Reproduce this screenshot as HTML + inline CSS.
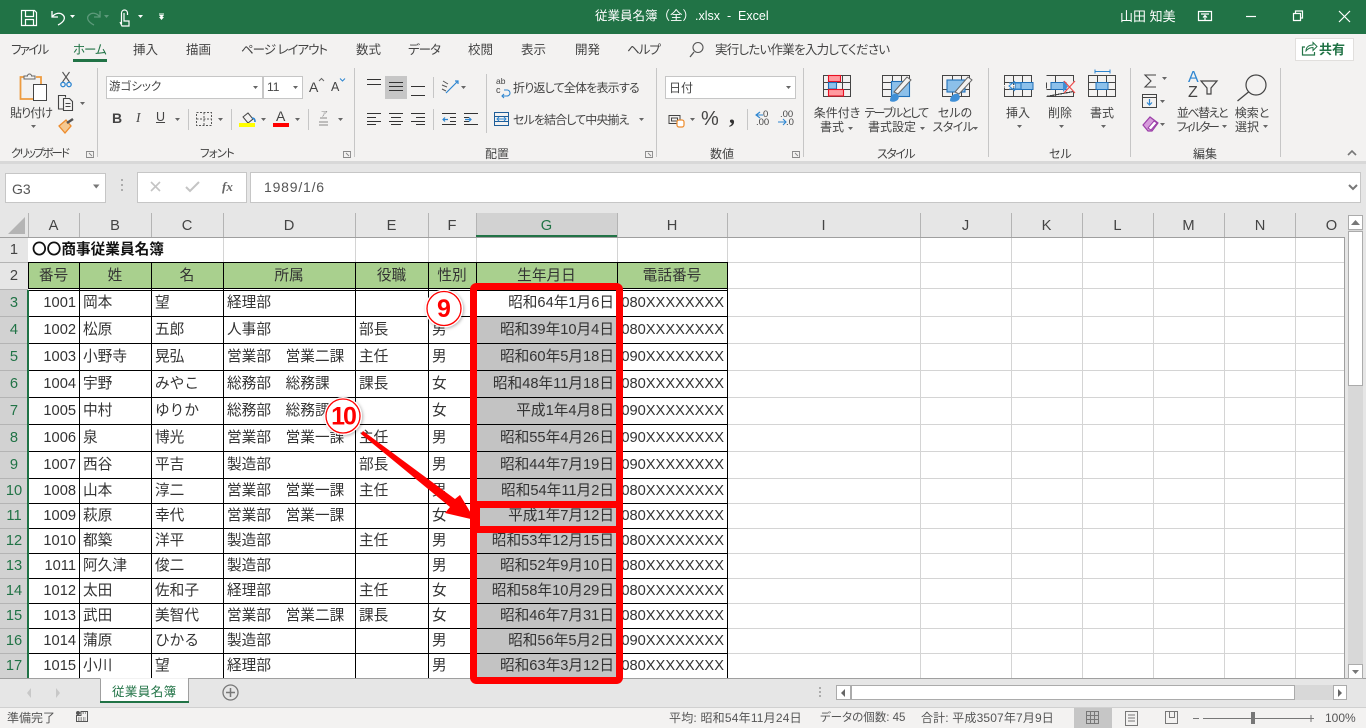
<!DOCTYPE html>
<html lang="ja"><head><meta charset="utf-8"><title>従業員名簿</title>
<style>
html,body{margin:0;padding:0}
body{width:1366px;height:728px;overflow:hidden;position:relative;background:#e6e6e6;font-family:"Liberation Sans","Noto Sans CJK JP",sans-serif}
.b{position:absolute}
.t{position:absolute;white-space:nowrap;font-size:12px;line-height:16px;color:#444;font-feature-settings:"palt"}
.m{text-align:center;transform:translateX(-50%)}
.w{color:#fff}
.tab{font-size:12.5px}
.st{font-size:12px;color:#555;top:710px}
svg.o{position:absolute;left:0;top:0}
table{position:absolute;left:0;top:213px;border-collapse:collapse;table-layout:fixed;width:1345px;font-size:14.67px;color:#333}
td{padding:1px 3px 0 4px;height:auto;white-space:nowrap;overflow:hidden;line-height:16px;box-sizing:border-box}
tr.h td,td.c{text-align:center;padding:1px 0 0}
tr.h td{padding-top:2px;color:#444}
td.n{text-align:center;padding:1px 0 0;color:#444}
tr.s td.n{color:#217346}
td.r{text-align:right}
tr.h td.sel{color:#217346}
</style></head><body>
<!-- backgrounds -->
<div class="b" style="left:0;top:0;width:1366px;height:34px;background:#217346"></div>
<div class="b" style="left:0;top:34px;width:1366px;height:127px;background:#f3f2f1"></div>
<div class="b" style="left:0;top:161px;width:1366px;height:3px;background:#d8d8d8"></div>
<div class="b" style="left:5px;top:173px;width:99px;height:28px;background:#fff;border:1px solid #c6c6c6"></div>
<div class="b" style="left:137px;top:172px;width:108px;height:29px;background:#fff;border:1px solid #c6c6c6"></div>
<div class="b" style="left:250px;top:172px;width:1109px;height:29px;background:#fff;border:1px solid #c6c6c6"></div>
<div class="b" style="left:28px;top:237px;width:1317px;height:441px;background:#fff"></div>
<div class="b" style="left:0;top:290px;width:28px;height:388px;background:#d2d2d2"></div>
<div class="b" style="left:476px;top:213px;width:141px;height:24px;background:#d2d2d2"></div>
<div class="b" style="left:0;top:678px;width:1366px;height:29px;background:#e6e6e6"></div>
<div class="b" style="left:0;top:707px;width:1366px;height:21px;background:#f3f2f1;border-top:1px solid #d0d0d0;box-sizing:border-box"></div>
<div class="b" style="left:1074px;top:708px;width:38px;height:20px;background:#c6c6c6"></div>
<!-- input boxes in ribbon -->
<div class="b" style="left:106px;top:76px;width:155px;height:21px;background:#fff;border:1px solid #c6c6c6"></div>
<div class="b" style="left:263px;top:76px;width:38px;height:21px;background:#fff;border:1px solid #c6c6c6"></div>
<div class="b" style="left:665px;top:76px;width:129px;height:21px;background:#fff;border:1px solid #c6c6c6"></div>
<div class="b" style="left:385px;top:76px;width:22px;height:23px;background:#c6c6c6"></div>
<div class="b" style="left:1295px;top:38px;width:57px;height:21px;background:#fff;border:1px solid #e1dfdd"></div>

<svg class="o" width="1366" height="728" viewBox="0 0 1366 728" fill="none">
<!-- G fill -->
<rect x="477" y="317" width="140" height="361" fill="#c3c3c3"/>
<!-- grid light -->
<path shape-rendering="crispEdges" stroke="#d4d4d4" d="M28 262.5H1345M727 288.5H1345M727 316.5H1345M727 343.5H1345M727 370.5H1345M727 397.5H1345M727 424.5H1345M727 451.5H1345M727 478.5H1345M727 503.5H1345M727 528.5H1345M727 553.5H1345M727 578.5H1345M727 603.5H1345M727 628.5H1345M727 653.5H1345M223.5 237V262M355.5 237V262M428.5 237V262M476.5 237V262M617.5 237V262M727.5 237V262M920.5 237V678M1011.5 237V678M1082.5 237V678M1153.5 237V678M1224.5 237V678M1295.5 237V678"/>
<!-- data grid black -->
<rect x="28" y="263" width="699" height="25" fill="#a9d08e"/>
<path shape-rendering="crispEdges" stroke="#000" d="M28 262.5H728M28 288.5H728M28 290.5H728M28 316.5H728M28 343.5H728M28 370.5H728M28 397.5H728M28 424.5H728M28 451.5H728M28 478.5H728M28 503.5H728M28 528.5H728M28 553.5H728M28 578.5H728M28 603.5H728M28 628.5H728M28 653.5H728M28.5 262V289M79.5 262V678M151.5 262V678M223.5 262V678M355.5 262V678M428.5 262V678M476.5 262V678M617.5 262V678M727.5 262V678"/>
<!-- header lines -->
<path shape-rendering="crispEdges" stroke="#b4b4b4" d="M28.5 213V237M79.5 213V237M151.5 213V237M223.5 213V237M355.5 213V237M428.5 213V237M476.5 213V237M617.5 213V237M727.5 213V237M920.5 213V237M1011.5 213V237M1082.5 213V237M1153.5 213V237M1224.5 213V237M1295.5 213V237M0 262.5H28M0 289.5H28M0 316.5H28M0 343.5H28M0 370.5H28M0 397.5H28M0 424.5H28M0 451.5H28M0 478.5H28M0 503.5H28M0 528.5H28M0 553.5H28M0 578.5H28M0 603.5H28M0 628.5H28M0 653.5H28"/>
<path shape-rendering="crispEdges" stroke="#9f9f9f" d="M0 237.5H1345M1344.5 237V678M0 678.5H100M188 678.5H1366"/>
<rect x="476" y="235" width="141" height="2" fill="#217346"/>
<rect x="27" y="290" width="2" height="388" fill="#217346"/>
<path d="M25 217V234H8z" fill="#b4b4b4"/>
<!-- scrollbars -->
<rect x="1348" y="230" width="15" height="448" fill="#d8d8d8"/>
<rect x="1348.5" y="215.5" width="14" height="14" fill="#fff" stroke="#ababab"/>
<rect x="1348.5" y="231.5" width="14" height="154" fill="#fff" stroke="#ababab"/>
<path d="M1351 225l4.5-5 4.5 5z" fill="#777"/>
<rect x="1348.5" y="664.5" width="14" height="14" fill="#fff" stroke="#ababab"/>
<path d="M1352 670l3.5 4 3.5-4z" fill="#777"/>
<rect x="836" y="685" width="510" height="15" fill="#d8d8d8"/>
<rect x="836.5" y="685.5" width="14" height="14" fill="#fff" stroke="#ababab"/>
<rect x="851.5" y="685.5" width="443" height="14" fill="#fff" stroke="#ababab"/>
<rect x="1333.5" y="685.5" width="13" height="14" fill="#fff" stroke="#ababab"/>
<path d="M845 689v8l-4-4zM1338 689v8l4-4z" fill="#666"/>
<!-- sheet tab -->
<path d="M100.500 678.500V702H188.500V678.500" fill="#fff" stroke="#9f9f9f"/>
<rect x="100" y="701" width="89" height="2" fill="#217346"/>
<path d="M31 688v10l-4-5zM56 688v10l4-5z" fill="#c8c8c8"/>
<circle cx="230.500" cy="692.500" r="7.500" stroke="#777" stroke-width="1.300"/>
<path d="M226 692.500h9M230.500 688v9" stroke="#777" stroke-width="1.500"/>
<path d="M820 687v2M820 691v2M820 695v2" stroke="#999" stroke-width="1.500"/>
<path d="M122 179v2M122 184v2M122 189v2" stroke="#999" stroke-width="1.500"/>
<!-- formula bar -->
<path d="M93 184.500h6.500l-3.250 4z" fill="#777"/>
<path d="M151 182l9 9M160 182l-9 9" stroke="#c4c4c4" stroke-width="1.600"/>
<path d="M186 187l4 4 9-9" stroke="#c4c4c4" stroke-width="2"/>
<path d="M1349 185l4 4 4-4" stroke="#777" stroke-width="2"/>
<!-- title bar icons -->
<g stroke="#fff" stroke-width="1.200">
<path d="M21.500 10.500h13l2 2v13h-15z M25.500 10.500v6h8v-6M25.500 25.500v-6h8v6"/>
<path d="M52 11v6h6M52 17c3-4 8-5 11-2 3 3 1 7-5 10" stroke-width="1.300"/>
<path d="M121.500 13a3 3 0 016 0v2M121.500 24v-11M124 13v8l5 0v5h-7l-2-4" />
<path d="M1198.500 11.500h13v9h-13zM1201 14h8M1205 20v-4M1203 17.500l2-2 2 2"/>
<path d="M1246 16.500h10"/>
<path d="M1293.500 13.500h7v7h-7zM1295.500 13v-2h7v7h-2"/>
<path d="M1339 11l11 11M1350 11l-11 11"/>
</g>
<path d="M100 11v6h-6M100 17c-3-4-8-5-11-2-3 3-1 7 5 10" stroke="#5d9a7b" stroke-width="1.300"/>
<path d="M70 15h5l-2.500 3zM138 15h5l-2.500 3zM159 15h5l-2.500 3zM159 17h5l-2.500 3z" fill="#fff"/>
<path d="M104 15h5l-2.500 3z" fill="#5d9a7b"/>
<rect x="159" y="13.500" width="5" height="1" fill="#fff"/>
<!-- tab underline -->
<rect x="73" y="59" width="34" height="3" fill="#217346"/>
<!-- search -->
<circle cx="698" cy="47.500" r="5" stroke="#555" stroke-width="1.100"/>
<path d="M694 52l-4 5" stroke="#555" stroke-width="1.300"/>
<!-- share -->
<path d="M1305 47h-2.500v8h12v-3" stroke="#217346" stroke-width="1.200"/>
<path d="M1306 51c0-4 3-6 7-6v-2.500l4 4-4 4v-3c-3 0-5 1-7 3.500z" stroke="#217346" stroke-width="1"/>
<!-- group separators -->
<path shape-rendering="crispEdges" stroke="#c6c6c6" d="M97.500 68V157M354.500 68V157M656.500 68V157M803.500 68V157M988.500 68V157M1130.500 68V157M1280.500 68V157M188.500 109V130M231.500 109V130M308.500 109V130M433.500 77V98M433.500 109V130M486.500 74V133M747.500 109V130"/>
<!-- launchers -->
<g stroke="#888" stroke-width=".9">
<path d="M86.500 151.500h7v6h-7zM89 153l3 3"/><path d="M343.500 151.500h7v6h-7zM346 153l3 3"/><path d="M645.500 151.500h7v6h-7zM648 153l3 3"/><path d="M792.500 151.500h7v6h-7zM795 153l3 3"/>
</g>
<path d="M1348 155l4-4 4 4" stroke="#777" stroke-width="1.600"/>
<!-- clipboard -->
<path d="M25 77h-4.500v22h12.500" stroke="#ed9b40" stroke-width="1.800"/><path d="M36 77h5v7" stroke="#ed9b40" stroke-width="1.800"/>
<path d="M24 79v-3h3.500a2 2 0 014 0h3.500v3z" fill="#f3f2f1" stroke="#666"/>
<rect x="33.500" y="84.500" width="13" height="16" fill="#fff" stroke="#444"/>
<!-- scissors -->
<path d="M62.500 72l7 10M69.500 72l-7 10" stroke="#555" stroke-width="1.100"/>
<circle cx="63" cy="84.500" r="2.200" stroke="#2e86d1" stroke-width="1.300"/><circle cx="69" cy="84.500" r="2.200" stroke="#2e86d1" stroke-width="1.300"/>
<!-- copy -->
<path d="M63 109h-4.500V95.500h7v2" stroke="#444" stroke-width="1.100"/><path d="M63.500 98.500h6l3 3v9h-9zM65.500 103.500h5M65.500 106.500h5" stroke="#444" stroke-width="1.100"/>
<path d="M80 102h5l-2.500 3z" fill="#666"/>
<!-- brush -->
<path d="M59 126l7-6 5 6-6 7z" fill="#f6c890" stroke="#ed8c2d" stroke-width="1.300"/><path d="M67 123l6-4" stroke="#555" stroke-width="2.500"/>
<!-- triangles -->
<path d="M31 125h5l-2.500 3zM253 86h5l-2.500 3zM293 86h5l-2.500 3zM175 118h5l-2.500 3zM218 118h5l-2.500 3zM261 118h5l-2.500 3zM295 118h5l-2.500 3zM338 118h5l-2.500 3zM461 86h5l-2.500 3zM639 118h5l-2.500 3zM786 86h5l-2.500 3zM690 118h5l-2.500 3z" fill="#666"/>
<!-- A^ Av -->
<path d="M319 81l2.500-2.500 2.500 2.500" stroke="#666"/><path d="M340 78.500l2.500 2.500 2.500-2.500" stroke="#2e86d1"/>
<!-- borders -->
<path d="M196.500 112.500h15v13h-15zM204 112.500v13M196.500 119h15" stroke="#555" stroke-dasharray="2 1.500"/>
<!-- fill -->
<path d="M243 117l5-4 5 6-5 4z" stroke="#444"/><path d="M252 118c2 0 3 1 3 4" stroke="#2e86d1" stroke-width="1.600"/>
<rect x="239" y="123" width="16" height="4" fill="#ffff00"/>
<rect x="273" y="123" width="16" height="4" fill="#f00"/>
<!-- ruby -->
<path d="M319 122h9M319 125h9M320 118h7" stroke="#888"/>
<!-- alignment -->
<g stroke="#333" shape-rendering="crispEdges">
<path d="M367 79.500h14M367 84.500h14"/>
<path d="M389 82.500h14M389 86.500h14M389 90.500h14"/>
<path d="M411 86.500h14M411 95.500h14"/>
<path d="M367 113.500h14M367 117.500h9M367 121.500h14M367 124.500h9"/>
<path d="M389 113.500h14M391 117.500h10M389 121.500h14M391 124.500h10"/>
<path d="M411 113.500h14M416 117.500h9M411 121.500h14M416 124.500h9"/>
<path d="M442 113.500h14M442 124.500h14M450 117.500h6M450 121.500h6"/>
<path d="M464 113.500h14M464 124.500h14M464 117.500h5M464 121.500h5"/>
</g>
<path d="M448 119.500h-5m2-2l-2 2 2 2M465 119.500h6m-2-2l2 2-2 2" stroke="#2e86d1" stroke-width="1.200"/>
<path d="M446 93l12-12M455 81h3v3" stroke="#2e86d1" stroke-width="1.200"/>
<path d="M443 81l5 3M442 85l5 2M442 89l4 2" stroke="#555"/>
<!-- wrap / merge -->
<path d="M504 90h3a2 2 0 010 6h-5m2-2l-2 2 2 2" stroke="#2e86d1" stroke-width="1.100"/>
<path d="M494.500 112.500h14v13h-14zM494.500 116.500h14M494.500 121.500h14" stroke="#1f5e99"/>
<path d="M497 119h9m-7-2l-2 2 2 2m5-4l2 2-2 2" stroke="#2e86d1"/>
<!-- number -->
<path d="M669 115.500h11v8h-11z M671.500 118h6v3h-6z" stroke="#444"/>
<rect x="677" y="120" width="7" height="7" rx="2" fill="#fff" stroke="#ed8c2d" stroke-width="1.200"/>
<path d="M756 115h7m-3-3l-4 3 4 3M778 122h8m-3-3l3 3-3 3" stroke="#2e86d1" stroke-width="1.100"/>
<!-- conditional fmt -->
<g stroke="#444" stroke-width="1.200" shape-rendering="crispEdges">
<path d="M823.500 75.500h27v21h-27zM823.500 82.500h27M823.500 89.500h27M834.500 75.500v21M842.500 75.500v21"/>
<path d="M882.500 75.500h27v21h-27zM882.500 82.500h27M882.500 89.500h27M892.500 75.500v21M901.500 75.500v21"/>
<path d="M942.500 75.500h27v21h-27zM942.500 89.500h27M952.500 75.500v21M961.500 75.500v21"/>
</g>
<rect x="828.500" y="75.500" width="12" height="6" fill="#ff9a9f" stroke="#e81123" stroke-width="1.100"/>
<rect x="828.500" y="82.500" width="8" height="6.500" fill="#8cc0ea" stroke="#1f6fb8" stroke-width="1.100"/>
<rect x="828.500" y="89.500" width="15" height="6.500" fill="#ff9a9f" stroke="#e81123" stroke-width="1.100"/>
<rect x="891.500" y="81.500" width="18" height="15" fill="#8cc0ea" stroke="#1f6fb8" stroke-width="1.100"/>
<rect x="947" y="80" width="18" height="12" fill="#8cc0ea" stroke="#1f6fb8" stroke-width="1.100"/>
<path d="M894 92l13-15 4 3-13 14z" fill="#f3f2f1" stroke="#666"/><path d="M890 101c0-5 3-8 7-7 3 2 2 6-1 7-2 1-4 1-6 0z" fill="#3f8fd6"/>
<path d="M955 92l13-15 4 3-13 14z" fill="#f3f2f1" stroke="#666"/><path d="M950 101c0-5 4-8 8-7 3 2 2 6-1 7-2 1-5 1-7 0z" fill="#3f8fd6"/>
<!-- cell icons -->
<g stroke="#444" stroke-width="1.200" shape-rendering="crispEdges">
<path d="M1004.500 75.500h27v21h-27zM1004.500 82.500h27M1004.500 89.500h27M1013.500 75.500v21M1022.500 75.500v21"/>
<path d="M1046.500 75.500h27v6M1073.500 91.500v5h-27zM1046.500 82.500v6M1046.500 89.500h20M1055.500 75.500v21"/>
<path d="M1088.500 75.500h27v21h-27zM1088.500 82.500h27M1088.500 89.500h27M1097.500 75.500v21M1106.500 75.500v21"/>
</g>
<rect x="1015" y="82.500" width="18" height="7" fill="#8cc0ea" stroke="#1f6fb8"/>
<path d="M1021 82.500v7" stroke="#1f6fb8"/>
<path d="M1003 85.500h12M1003 87h12" stroke="#f3f2f1"/>
<path d="M1015 81l-6 5 6 5M1009 83h12M1009 89h12" stroke="#2e86d1"/>
<rect x="1051" y="82.500" width="15" height="7" fill="#8cc0ea" stroke="#1f6fb8"/>
<path d="M1063 81v11l5-5.500z" fill="#3f8fd6"/>
<path d="M1064 81l11 12M1075 81l-11 12" stroke="#f04b4b" stroke-width="1.200"/>
<rect x="1096" y="82.500" width="12" height="7" fill="#8cc0ea" stroke="#1f6fb8"/>
<path d="M1095 71.500h15M1095 69.500v4M1110 69.500v4" stroke="#2e86d1"/>
<!-- edit -->
<path d="M1156 75h-11l6 6-6 6h11" stroke="#444" stroke-width="1.100"/>
<path d="M1162 77h5l-2.500 3zM1160 100h5l-2.500 3zM1160 123h5l-2.500 3zM1222 125h5l-2.500 3zM1263 125h5l-2.500 3zM848 127h5l-2.500 3zM920 127h5l-2.500 3zM973 127h5l-2.500 3zM1017 125h5l-2.500 3zM1059 125h5l-2.500 3zM1101 125h5l-2.500 3z" fill="#666"/>
<rect x="1142.500" y="94.500" width="14" height="13" stroke="#444"/><path d="M1142.500 97.500h14" stroke="#444"/>
<path d="M1149.500 99v6m-2.500-2.500l2.500 2.500 2.500-2.500" stroke="#2e86d1" stroke-width="1.200"/>
<path d="M1143 125l7-8 8 6-6 8h-4z" fill="#d79bdc" stroke="#9b3fa8" stroke-width="1.200"/>
<path d="M1148 128l6-7 3 2-6 7z" fill="#fff" stroke="#9b3fa8"/>
<path d="M1201 81h16l-6 7v6h-4v-6z" stroke="#444" stroke-width="1.200"/>
<circle cx="1256" cy="85" r="10" stroke="#444" stroke-width="1.200"/>
<path d="M1248.500 92l-11 9" stroke="#444" stroke-width="1.300"/>
<!-- status bar icons -->
<circle cx="78" cy="713" r="2" fill="#555"/><path d="M81 711.500h6.500v10h-11v-6h4.500z" stroke="#555"/><path d="M78 718h8M78 720h8M80 713h6" stroke="#555" stroke-dasharray="1.500 1"/>
<g stroke="#777" shape-rendering="crispEdges">
<path d="M1086.500 711.500h12v12h-12zM1086.500 715.500h12M1086.500 719.500h12M1090.500 711.500v12M1094.500 711.500v12"/>
<path d="M1125.500 711.500h12v14h-12zM1128 715h7M1128 718h7M1128 721h7"/>
<path d="M1165.500 711.500h12v12h-12zM1169.500 711.500v6h5v-6"/>
<path d="M1193 718.500h6M1203 718.500h106M1308 718.500h6M1311 715v7"/>
</g>
<rect x="1251" y="712" width="4" height="12" fill="#777"/>
</svg>

<!-- grid text -->
<table>
<colgroup><col style="width:28px"><col style="width:51px"><col style="width:72px"><col style="width:72px"><col style="width:132px"><col style="width:73px"><col style="width:48px"><col style="width:141px"><col style="width:110px"><col style="width:193px"><col style="width:91px"><col style="width:71px"><col style="width:71px"><col style="width:71px"><col style="width:72px"><col style="width:49px"></colgroup>
<tr class="h" style="height:24px"><td></td><td>A</td><td>B</td><td>C</td><td>D</td><td>E</td><td>F</td><td class="sel">G</td><td>H</td><td>I</td><td>J</td><td>K</td><td>L</td><td>M</td><td>N</td><td style="padding-left:22px">O</td></tr>
<tr style="height:25px"><td class="n">1</td><td colspan="3" style="font-weight:bold;color:#111;overflow:visible">〇〇商事従業員名簿</td><td colspan="12"></td></tr>
<tr style="height:27px"><td class="n">2</td><td class="c">番号</td><td class="c">姓</td><td class="c">名</td><td class="c">所属</td><td class="c">役職</td><td class="c">性別</td><td class="c">生年月日</td><td class="c">電話番号</td><td colspan="7"></td></tr>
<tr class="s" style="height:27px"><td class="n">3</td><td class="r">1001</td><td>岡本</td><td>望</td><td>経理部</td><td></td><td>男</td><td class="r">昭和64年1月6日</td><td class="r">080XXXXXXXX</td><td colspan="7"></td></tr>
<tr class="s" style="height:27px"><td class="n">4</td><td class="r">1002</td><td>松原</td><td>五郎</td><td>人事部</td><td>部長</td><td>男</td><td class="r">昭和39年10月4日</td><td class="r">080XXXXXXXX</td><td colspan="7"></td></tr>
<tr class="s" style="height:27px"><td class="n">5</td><td class="r">1003</td><td>小野寺</td><td>晃弘</td><td>営業部　営業二課</td><td>主任</td><td>男</td><td class="r">昭和60年5月18日</td><td class="r">090XXXXXXXX</td><td colspan="7"></td></tr>
<tr class="s" style="height:27px"><td class="n">6</td><td class="r">1004</td><td>宇野</td><td>みやこ</td><td>総務部　総務課</td><td>課長</td><td>女</td><td class="r">昭和48年11月18日</td><td class="r">080XXXXXXXX</td><td colspan="7"></td></tr>
<tr class="s" style="height:27px"><td class="n">7</td><td class="r">1005</td><td>中村</td><td>ゆりか</td><td>総務部　総務課</td><td></td><td>女</td><td class="r">平成1年4月8日</td><td class="r">090XXXXXXXX</td><td colspan="7"></td></tr>
<tr class="s" style="height:27px"><td class="n">8</td><td class="r">1006</td><td>泉</td><td>博光</td><td>営業部　営業一課</td><td>主任</td><td>男</td><td class="r">昭和55年4月26日</td><td class="r">090XXXXXXXX</td><td colspan="7"></td></tr>
<tr class="s" style="height:27px"><td class="n">9</td><td class="r">1007</td><td>西谷</td><td>平吉</td><td>製造部</td><td>部長</td><td>男</td><td class="r">昭和44年7月19日</td><td class="r">090XXXXXXXX</td><td colspan="7"></td></tr>
<tr class="s" style="height:25px"><td class="n">10</td><td class="r">1008</td><td>山本</td><td>淳二</td><td>営業部　営業一課</td><td>主任</td><td>男</td><td class="r">昭和54年11月2日</td><td class="r">080XXXXXXXX</td><td colspan="7"></td></tr>
<tr class="s" style="height:25px"><td class="n">11</td><td class="r">1009</td><td>萩原</td><td>幸代</td><td>営業部　営業一課</td><td></td><td>女</td><td class="r">平成1年7月12日</td><td class="r">080XXXXXXXX</td><td colspan="7"></td></tr>
<tr class="s" style="height:25px"><td class="n">12</td><td class="r">1010</td><td>都築</td><td>洋平</td><td>製造部</td><td>主任</td><td>男</td><td class="r">昭和53年12月15日</td><td class="r">080XXXXXXXX</td><td colspan="7"></td></tr>
<tr class="s" style="height:25px"><td class="n">13</td><td class="r">1011</td><td>阿久津</td><td>俊二</td><td>製造部</td><td></td><td>男</td><td class="r">昭和52年9月10日</td><td class="r">080XXXXXXXX</td><td colspan="7"></td></tr>
<tr class="s" style="height:25px"><td class="n">14</td><td class="r">1012</td><td>太田</td><td>佐和子</td><td>経理部</td><td>主任</td><td>女</td><td class="r">昭和58年10月29日</td><td class="r">080XXXXXXXX</td><td colspan="7"></td></tr>
<tr class="s" style="height:25px"><td class="n">15</td><td class="r">1013</td><td>武田</td><td>美智代</td><td>営業部　営業二課</td><td>課長</td><td>女</td><td class="r">昭和46年7月31日</td><td class="r">080XXXXXXXX</td><td colspan="7"></td></tr>
<tr class="s" style="height:25px"><td class="n">16</td><td class="r">1014</td><td>蒲原</td><td>ひかる</td><td>製造部</td><td></td><td>男</td><td class="r">昭和56年5月2日</td><td class="r">090XXXXXXXX</td><td colspan="7"></td></tr>
<tr class="s" style="height:25px"><td class="n">17</td><td class="r">1015</td><td>小川</td><td>望</td><td>経理部</td><td></td><td>男</td><td class="r">昭和63年3月12日</td><td class="r">080XXXXXXXX</td><td colspan="7"></td></tr>
</table>

<!-- title bar text -->
<div class="t w" style="left:595px;top:8px;font-size:12.5px;font-feature-settings:normal">従業員名簿（全）.xlsx&nbsp; -&nbsp; Excel</div>
<div class="t w" style="left:1120px;top:9px;font-size:13px">山田 知美</div>
<!-- tabs -->
<div class="t tab" style="left:11px;top:42px;letter-spacing:-1.7px">ファイル</div>
<div class="t tab" style="left:73px;top:42px;color:#217346;letter-spacing:-1px">ホーム</div>
<div class="t tab" style="left:133px;top:42px">挿入</div>
<div class="t tab" style="left:186px;top:42px">描画</div>
<div class="t tab" style="left:241px;top:42px;letter-spacing:-1px">ページ レイアウト</div>
<div class="t tab" style="left:356px;top:42px">数式</div>
<div class="t tab" style="left:408px;top:42px;letter-spacing:-1px">データ</div>
<div class="t tab" style="left:468px;top:42px">校閲</div>
<div class="t tab" style="left:521px;top:42px">表示</div>
<div class="t tab" style="left:575px;top:42px">開発</div>
<div class="t tab" style="left:627px;top:42px;letter-spacing:-1px">ヘルプ</div>
<div class="t tab" style="left:715px;top:42px;letter-spacing:-.75px">実行したい作業を入力してください</div>
<div class="t" style="left:1319px;top:42px;font-size:13px;font-weight:bold;color:#217346">共有</div>
<!-- ribbon text -->
<div class="t m" style="left:31px;top:105px;letter-spacing:-1px">貼り付け</div>
<div class="t" style="left:109px;top:79px;font-size:11.5px">游ゴシック</div>
<div class="t" style="left:267px;top:79px;font-size:12px">11</div>
<div class="t" style="left:309px;top:78px;font-size:14px;line-height:18px">A</div>
<div class="t" style="left:331px;top:79px;font-size:12.5px">A</div>
<div class="t" style="left:112px;top:110px;font-size:14px;font-weight:bold;font-family:'Liberation Sans',sans-serif">B</div>
<div class="t" style="left:136px;top:110px;font-size:13.5px;font-style:italic;font-family:'Liberation Serif',serif">I</div>
<div class="t" style="left:156px;top:109px;font-size:12.5px;text-decoration:underline">U</div>
<div class="t" style="left:276px;top:108px;font-size:14px">A</div>
<div class="t" style="left:321px;top:110px;font-size:7px;line-height:9px;color:#888">ア</div>
<div class="t" style="left:513px;top:80px;letter-spacing:-.8px">折り返して全体を表示する</div>
<div class="t" style="left:513px;top:112px;letter-spacing:-.9px">セルを結合して中央揃え</div>
<div class="t" style="left:496px;top:77px;font-size:8.500px;line-height:9px;color:#444">ab</div>
<div class="t" style="left:496px;top:85px;font-size:9px;line-height:10px;color:#444">c</div>
<div class="t" style="left:669px;top:80px">日付</div>
<div class="t" style="left:701px;top:110px;font-size:20px;line-height:18px;color:#444">%</div>
<div class="t" style="left:729px;top:106px;font-size:24px;line-height:20px;font-weight:bold;font-family:'Liberation Serif',serif;color:#333">,</div>
<div class="t" style="left:763px;top:110px;font-size:9.500px;line-height:9px">0</div>
<div class="t" style="left:756px;top:118px;font-size:9.500px;line-height:9px">.00</div>
<div class="t" style="left:780px;top:110px;font-size:9.500px;line-height:9px">.00</div>
<div class="t" style="left:786px;top:118px;font-size:9.500px;line-height:9px">.0</div>
<div class="t m" style="left:837px;top:105px">条件付き</div>
<div class="t m" style="left:832px;top:119px">書式</div>
<div class="t m" style="left:896px;top:105px;letter-spacing:-1.7px">テーブルとして</div>
<div class="t m" style="left:892px;top:119px">書式設定</div>
<div class="t m" style="left:955px;top:105px">セルの</div>
<div class="t m" style="left:953px;top:119px;letter-spacing:-.5px">スタイル</div>
<div class="t m" style="left:1018px;top:105px">挿入</div>
<div class="t m" style="left:1060px;top:105px">削除</div>
<div class="t m" style="left:1102px;top:105px">書式</div>
<div class="t m" style="left:1202px;top:105px;letter-spacing:-1.500px">並べ替えと</div>
<div class="t m" style="left:1197px;top:119px;letter-spacing:-2.300px">フィルター</div>
<div class="t m" style="left:1252px;top:105px">検索と</div>
<div class="t m" style="left:1247px;top:119px">選択</div>
<div class="t" style="left:1188px;top:70px;font-size:16px;color:#2e86d1">A</div>
<div class="t" style="left:1188px;top:85px;font-size:16px;color:#444">Z</div>
<div class="t" style="left:11px;top:146px;font-size:11.500px;letter-spacing:-2px">クリップボード</div>
<div class="t" style="left:200px;top:146px;font-size:11.500px;letter-spacing:-1px">フォント</div>
<div class="t" style="left:485px;top:146px">配置</div>
<div class="t" style="left:710px;top:146px">数値</div>
<div class="t" style="left:877px;top:146px;letter-spacing:-1.500px">スタイル</div>
<div class="t" style="left:1049px;top:146px">セル</div>
<div class="t" style="left:1193px;top:146px">編集</div>
<!-- formula -->
<div class="t" style="left:12px;top:181px;font-size:14px;color:#555">G3</div>
<div class="t" style="left:222px;top:179px;font-size:13px;font-style:italic;font-weight:bold;font-family:'Liberation Serif',serif;color:#666">fx</div>
<div class="t" style="left:264px;top:179px;font-size:14px;color:#555;letter-spacing:.8px">1989/1/6</div>
<!-- sheet / status -->
<div class="t" style="left:112px;top:684px;font-size:12.500px;color:#217346;letter-spacing:.4px">従業員名簿</div>
<div class="t st" style="left:7px">準備完了</div>
<div class="t st" style="left:669px;letter-spacing:.2px">平均: 昭和54年11月24日</div>
<div class="t st" style="left:820px;font-size:11.500px">データの個数: 45</div>
<div class="t st" style="left:921px;letter-spacing:.15px">合計: 平成3507年7月9日</div>
<div class="t st" style="left:1325px">100%</div>

<!-- annotations -->
<svg class="o" width="1366" height="728" viewBox="0 0 1366 728" fill="none">
<defs><filter id="sh" x="-30%" y="-30%" width="160%" height="160%"><feDropShadow dx="1" dy="1" stdDeviation="1.500" flood-color="#000" flood-opacity=".3"/></filter></defs>
<path d="M363 431L455 499 460 495 475 520 445 513 450 507 361 434z" fill="#f00"/>
<rect x="473.500" y="286.500" width="146" height="394" rx="3" stroke="#f00" stroke-width="7"/>
<path d="M477 504.500h139M477 529.500h139" stroke="#f00" stroke-width="7"/>
<rect x="477" y="508" width="3" height="18" fill="#f00"/>
<g filter="url(#sh)"><circle cx="444" cy="308.500" r="19" fill="#fff"/></g>
<circle cx="444" cy="308.500" r="17" fill="#fff" fill-opacity=".75" stroke="#f00" stroke-width="1.300"/>
<text x="444" y="317" text-anchor="middle" font-family="Liberation Sans, sans-serif" font-size="25" font-weight="bold" fill="#f00">9</text>
<g filter="url(#sh)"><circle cx="343" cy="416" r="19" fill="#fff"/></g>
<circle cx="343" cy="416" r="17" fill="#fff" fill-opacity=".75" stroke="#f00" stroke-width="1.300"/>
<text x="343" y="424.500" text-anchor="middle" font-family="Liberation Sans, sans-serif" font-size="25" font-weight="bold" letter-spacing="-2" fill="#f00">10</text>
</svg>
</body></html>
